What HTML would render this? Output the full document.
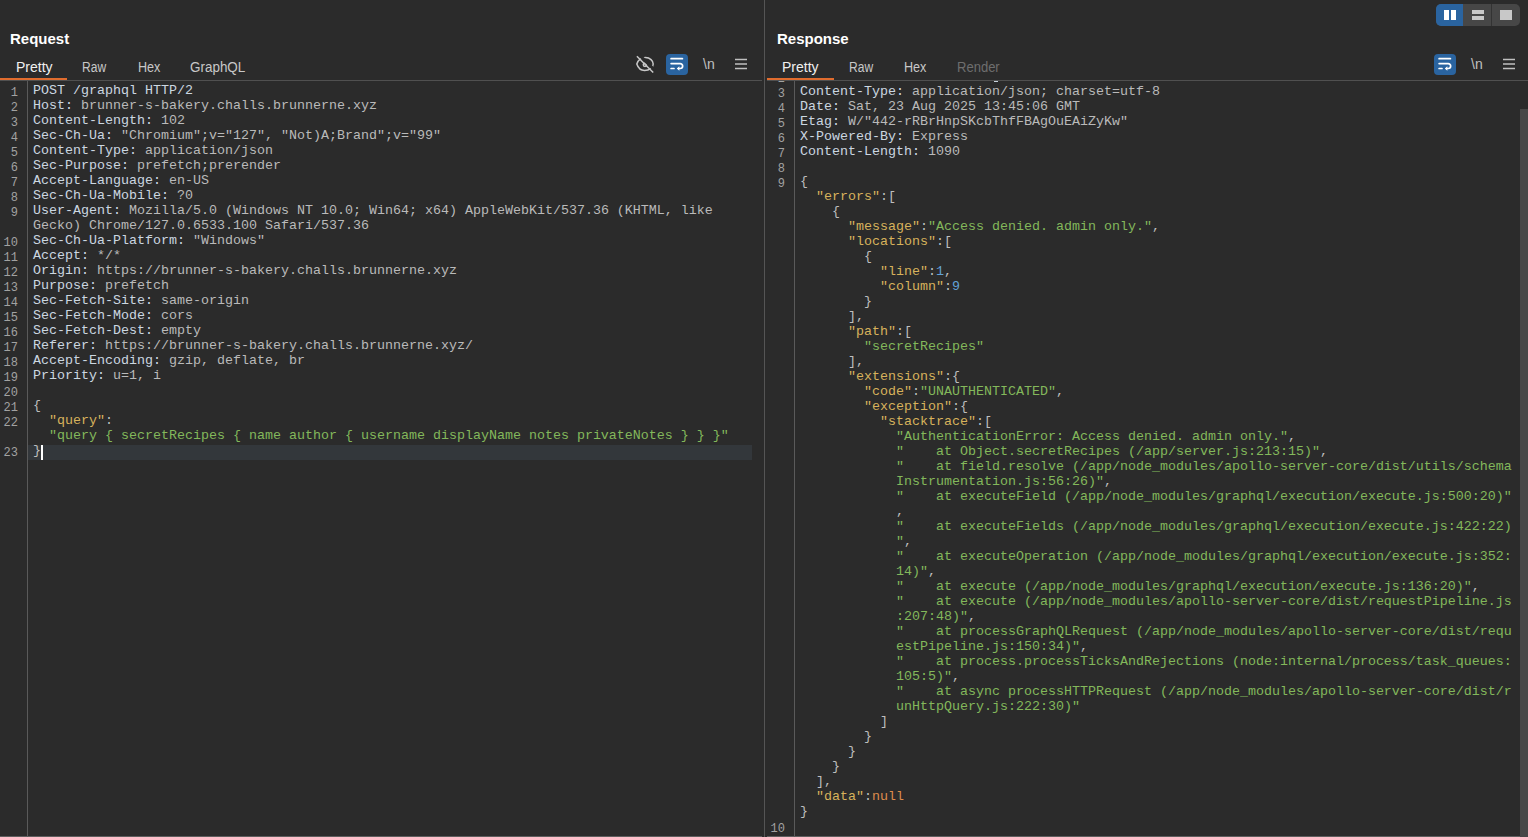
<!DOCTYPE html>
<html><head><meta charset="utf-8">
<style>
html,body{margin:0;padding:0;}
body{width:1528px;height:837px;background:#2b2b2b;position:relative;overflow:hidden;font-family:"Liberation Sans",sans-serif;}
.abs{position:absolute;}
.title{position:absolute;white-space:nowrap;font-weight:bold;font-size:15px;color:#ffffff;line-height:20px;}
.tab{position:absolute;white-space:nowrap;transform-origin:0 0;font-size:14px;color:#c8c8c8;line-height:18px;}
.row{position:absolute;white-space:pre;font-family:"Liberation Mono",monospace;font-size:13.333px;line-height:15px;height:15px;color:#bebebe;}
.ln{position:absolute;white-space:pre;font-family:"Liberation Mono",monospace;font-size:12px;line-height:15px;color:#a2a2a2;text-align:right;}
.hn{color:#ccd7e1}.hv{color:#bababa}.k{color:#d7b25c}.s{color:#83b85b}.nu{color:#62a2d7}.nl{color:#dd8d4d}.p{color:#bebebe}
.clipreq{position:absolute;left:0;top:81px;width:764px;height:756px;overflow:hidden;}
.clipres{position:absolute;left:765px;top:81px;width:763px;height:756px;overflow:hidden;}
</style></head><body>
<!-- layout buttons -->
<div class="abs" style="left:1436px;top:4px;width:84px;height:22px;border-radius:5px;background:#474747;overflow:hidden">
  <div class="abs" style="left:0;top:0;width:27px;height:22px;background:#2a64a0"></div>
  <div class="abs" style="left:55px;top:0;width:1px;height:22px;background:#333"></div>
  <div class="abs" style="left:8px;top:6px;width:5px;height:10px;background:#fff"></div>
  <div class="abs" style="left:15px;top:6px;width:5px;height:10px;background:#fff"></div>
  <div class="abs" style="left:36px;top:6px;width:12px;height:4px;background:#c8c8c8"></div>
  <div class="abs" style="left:36px;top:12px;width:12px;height:4px;background:#c8c8c8"></div>
  <div class="abs" style="left:64px;top:6px;width:12px;height:10px;background:#c8c8c8"></div>
</div>

<div class="title" style="left:10px;top:29px">Request</div>
<div class="title" style="left:777px;top:29px">Response</div>

<div class="tab" style="left:16px;top:58px;color:#f0f0f0">Pretty</div>
<div class="tab" style="left:82px;top:58px;transform:scaleX(0.86)">Raw</div>
<div class="tab" style="left:138px;top:58px;transform:scaleX(0.9)">Hex</div>
<div class="tab" style="left:190px;top:58px;transform:scaleX(0.96)">GraphQL</div>
<div class="tab" style="left:782px;top:58px;color:#f0f0f0">Pretty</div>
<div class="tab" style="left:849px;top:58px;transform:scaleX(0.86)">Raw</div>
<div class="tab" style="left:904px;top:58px;transform:scaleX(0.9)">Hex</div>
<div class="tab" style="left:957px;top:58px;color:#6e6e6e;transform:scaleX(0.93)">Render</div>

<!-- separators -->
<div class="abs" style="left:0;top:80px;width:762px;height:1px;background:#505050"></div>
<div class="abs" style="left:767px;top:80px;width:761px;height:1px;background:#505050"></div>
<div class="abs" style="left:0;top:78px;width:67px;height:2px;background:#e06c2e"></div>
<div class="abs" style="left:767px;top:78px;width:67px;height:2px;background:#e06c2e"></div>
<div class="abs" style="left:764px;top:0;width:1px;height:837px;background:#555"></div>
<div class="abs" style="left:0;top:836px;width:762px;height:1px;background:#5e5e5e"></div>
<div class="abs" style="left:767px;top:836px;width:761px;height:1px;background:#5e5e5e"></div>

<!-- request editor -->
<div class="clipreq">
 <div class="abs" style="left:0;top:-81px;width:764px;height:837px">
  <div class="abs" style="left:27px;top:81px;width:1px;height:756px;background:#5a5a5a"></div>
  <div class="abs" style="left:28px;top:445px;width:724px;height:15px;background:#33373b"></div>
  <div class="abs" style="left:41px;top:445px;width:2px;height:15px;background:#ffffff"></div>
<div class="ln" style="top:86px;right:746px">1</div>
<div class="row" style="top:83px;left:33px"><span class="hn">POST /graphql HTTP/2</span></div>
<div class="ln" style="top:101px;right:746px">2</div>
<div class="row" style="top:98px;left:33px"><span class="hn">Host:</span><span class="hv"> brunner-s-bakery.challs.brunnerne.xyz</span></div>
<div class="ln" style="top:116px;right:746px">3</div>
<div class="row" style="top:113px;left:33px"><span class="hn">Content-Length:</span><span class="hv"> 102</span></div>
<div class="ln" style="top:131px;right:746px">4</div>
<div class="row" style="top:128px;left:33px"><span class="hn">Sec-Ch-Ua:</span><span class="hv"> "Chromium";v="127", "Not)A;Brand";v="99"</span></div>
<div class="ln" style="top:146px;right:746px">5</div>
<div class="row" style="top:143px;left:33px"><span class="hn">Content-Type:</span><span class="hv"> application/json</span></div>
<div class="ln" style="top:161px;right:746px">6</div>
<div class="row" style="top:158px;left:33px"><span class="hn">Sec-Purpose:</span><span class="hv"> prefetch;prerender</span></div>
<div class="ln" style="top:176px;right:746px">7</div>
<div class="row" style="top:173px;left:33px"><span class="hn">Accept-Language:</span><span class="hv"> en-US</span></div>
<div class="ln" style="top:191px;right:746px">8</div>
<div class="row" style="top:188px;left:33px"><span class="hn">Sec-Ch-Ua-Mobile:</span><span class="hv"> ?0</span></div>
<div class="ln" style="top:206px;right:746px">9</div>
<div class="row" style="top:203px;left:33px"><span class="hn">User-Agent:</span><span class="hv"> Mozilla/5.0 (Windows NT 10.0; Win64; x64) AppleWebKit/537.36 (KHTML, like</span></div>
<div class="row" style="top:218px;left:33px"><span class="hv">Gecko) Chrome/127.0.6533.100 Safari/537.36</span></div>
<div class="ln" style="top:236px;right:746px">10</div>
<div class="row" style="top:233px;left:33px"><span class="hn">Sec-Ch-Ua-Platform:</span><span class="hv"> "Windows"</span></div>
<div class="ln" style="top:251px;right:746px">11</div>
<div class="row" style="top:248px;left:33px"><span class="hn">Accept:</span><span class="hv"> */*</span></div>
<div class="ln" style="top:266px;right:746px">12</div>
<div class="row" style="top:263px;left:33px"><span class="hn">Origin:</span><span class="hv"> https://brunner-s-bakery.challs.brunnerne.xyz</span></div>
<div class="ln" style="top:281px;right:746px">13</div>
<div class="row" style="top:278px;left:33px"><span class="hn">Purpose:</span><span class="hv"> prefetch</span></div>
<div class="ln" style="top:296px;right:746px">14</div>
<div class="row" style="top:293px;left:33px"><span class="hn">Sec-Fetch-Site:</span><span class="hv"> same-origin</span></div>
<div class="ln" style="top:311px;right:746px">15</div>
<div class="row" style="top:308px;left:33px"><span class="hn">Sec-Fetch-Mode:</span><span class="hv"> cors</span></div>
<div class="ln" style="top:326px;right:746px">16</div>
<div class="row" style="top:323px;left:33px"><span class="hn">Sec-Fetch-Dest:</span><span class="hv"> empty</span></div>
<div class="ln" style="top:341px;right:746px">17</div>
<div class="row" style="top:338px;left:33px"><span class="hn">Referer:</span><span class="hv"> https://brunner-s-bakery.challs.brunnerne.xyz/</span></div>
<div class="ln" style="top:356px;right:746px">18</div>
<div class="row" style="top:353px;left:33px"><span class="hn">Accept-Encoding:</span><span class="hv"> gzip, deflate, br</span></div>
<div class="ln" style="top:371px;right:746px">19</div>
<div class="row" style="top:368px;left:33px"><span class="hn">Priority:</span><span class="hv"> u=1, i</span></div>
<div class="ln" style="top:386px;right:746px">20</div>
<div class="row" style="top:383px;left:33px"></div>
<div class="ln" style="top:401px;right:746px">21</div>
<div class="row" style="top:398px;left:33px"><span class="p">{</span></div>
<div class="ln" style="top:416px;right:746px">22</div>
<div class="row" style="top:413px;left:33px">  <span class="k">"query"</span><span class="p">:</span></div>
<div class="row" style="top:428px;left:33px">  <span class="s">"query { secretRecipes { name author { username displayName notes privateNotes } } }"</span></div>
<div class="ln" style="top:446px;right:746px">23</div>
<div class="row" style="top:443px;left:33px"><span class="p">}</span></div>
 </div>
</div>

<!-- response editor -->
<div class="clipres">
 <div class="abs" style="left:-765px;top:-81px;width:1528px;height:837px">
  <div class="abs" style="left:794px;top:81px;width:1px;height:756px;background:#5a5a5a"></div>
  <div class="ln" style="top:72px;right:743px">2</div>
  <div class="abs" style="left:994px;top:81px;width:4px;height:1px;background:#c8d4de"></div>
<div class="ln" style="top:87px;right:743px">3</div>
<div class="row" style="top:84px;left:800px"><span class="hn">Content-Type:</span><span class="hv"> application/json; charset=utf-8</span></div>
<div class="ln" style="top:102px;right:743px">4</div>
<div class="row" style="top:99px;left:800px"><span class="hn">Date:</span><span class="hv"> Sat, 23 Aug 2025 13:45:06 GMT</span></div>
<div class="ln" style="top:117px;right:743px">5</div>
<div class="row" style="top:114px;left:800px"><span class="hn">Etag:</span><span class="hv"> W/"442-rRBrHnpSKcbThfFBAgOuEAiZyKw"</span></div>
<div class="ln" style="top:132px;right:743px">6</div>
<div class="row" style="top:129px;left:800px"><span class="hn">X-Powered-By:</span><span class="hv"> Express</span></div>
<div class="ln" style="top:147px;right:743px">7</div>
<div class="row" style="top:144px;left:800px"><span class="hn">Content-Length:</span><span class="hv"> 1090</span></div>
<div class="ln" style="top:162px;right:743px">8</div>
<div class="row" style="top:159px;left:800px"></div>
<div class="ln" style="top:177px;right:743px">9</div>
<div class="row" style="top:174px;left:800px"><span class="p">{</span></div>
<div class="row" style="top:189px;left:800px">  <span class="k">"errors"</span><span class="p">:[</span></div>
<div class="row" style="top:204px;left:800px">    <span class="p">{</span></div>
<div class="row" style="top:219px;left:800px">      <span class="k">"message"</span><span class="p">:</span><span class="s">"Access denied. admin only."</span><span class="p">,</span></div>
<div class="row" style="top:234px;left:800px">      <span class="k">"locations"</span><span class="p">:[</span></div>
<div class="row" style="top:249px;left:800px">        <span class="p">{</span></div>
<div class="row" style="top:264px;left:800px">          <span class="k">"line"</span><span class="p">:</span><span class="nu">1</span><span class="p">,</span></div>
<div class="row" style="top:279px;left:800px">          <span class="k">"column"</span><span class="p">:</span><span class="nu">9</span></div>
<div class="row" style="top:294px;left:800px">        <span class="p">}</span></div>
<div class="row" style="top:309px;left:800px">      <span class="p">],</span></div>
<div class="row" style="top:324px;left:800px">      <span class="k">"path"</span><span class="p">:[</span></div>
<div class="row" style="top:339px;left:800px">        <span class="s">"secretRecipes"</span></div>
<div class="row" style="top:354px;left:800px">      <span class="p">],</span></div>
<div class="row" style="top:369px;left:800px">      <span class="k">"extensions"</span><span class="p">:{</span></div>
<div class="row" style="top:384px;left:800px">        <span class="k">"code"</span><span class="p">:</span><span class="s">"UNAUTHENTICATED"</span><span class="p">,</span></div>
<div class="row" style="top:399px;left:800px">        <span class="k">"exception"</span><span class="p">:{</span></div>
<div class="row" style="top:414px;left:800px">          <span class="k">"stacktrace"</span><span class="p">:[</span></div>
<div class="row" style="top:429px;left:800px">            <span class="s">"AuthenticationError: Access denied. admin only."</span><span class="p">,</span></div>
<div class="row" style="top:444px;left:800px">            <span class="s">"    at Object.secretRecipes (/app/server.js:213:15)"</span><span class="p">,</span></div>
<div class="row" style="top:459px;left:800px">            <span class="s">"    at field.resolve (/app/node_modules/apollo-server-core/dist/utils/schema</span></div>
<div class="row" style="top:474px;left:800px">            <span class="s">Instrumentation.js:56:26)"</span><span class="p">,</span></div>
<div class="row" style="top:489px;left:800px">            <span class="s">"    at executeField (/app/node_modules/graphql/execution/execute.js:500:20)"</span></div>
<div class="row" style="top:504px;left:800px">            <span class="p">,</span></div>
<div class="row" style="top:519px;left:800px">            <span class="s">"    at executeFields (/app/node_modules/graphql/execution/execute.js:422:22)</span></div>
<div class="row" style="top:534px;left:800px">            <span class="s">"</span><span class="p">,</span></div>
<div class="row" style="top:549px;left:800px">            <span class="s">"    at executeOperation (/app/node_modules/graphql/execution/execute.js:352:</span></div>
<div class="row" style="top:564px;left:800px">            <span class="s">14)"</span><span class="p">,</span></div>
<div class="row" style="top:579px;left:800px">            <span class="s">"    at execute (/app/node_modules/graphql/execution/execute.js:136:20)"</span><span class="p">,</span></div>
<div class="row" style="top:594px;left:800px">            <span class="s">"    at execute (/app/node_modules/apollo-server-core/dist/requestPipeline.js</span></div>
<div class="row" style="top:609px;left:800px">            <span class="s">:207:48)"</span><span class="p">,</span></div>
<div class="row" style="top:624px;left:800px">            <span class="s">"    at processGraphQLRequest (/app/node_modules/apollo-server-core/dist/requ</span></div>
<div class="row" style="top:639px;left:800px">            <span class="s">estPipeline.js:150:34)"</span><span class="p">,</span></div>
<div class="row" style="top:654px;left:800px">            <span class="s">"    at process.processTicksAndRejections (node:internal/process/task_queues:</span></div>
<div class="row" style="top:669px;left:800px">            <span class="s">105:5)"</span><span class="p">,</span></div>
<div class="row" style="top:684px;left:800px">            <span class="s">"    at async processHTTPRequest (/app/node_modules/apollo-server-core/dist/r</span></div>
<div class="row" style="top:699px;left:800px">            <span class="s">unHttpQuery.js:222:30)"</span></div>
<div class="row" style="top:714px;left:800px">          <span class="p">]</span></div>
<div class="row" style="top:729px;left:800px">        <span class="p">}</span></div>
<div class="row" style="top:744px;left:800px">      <span class="p">}</span></div>
<div class="row" style="top:759px;left:800px">    <span class="p">}</span></div>
<div class="row" style="top:774px;left:800px">  <span class="p">],</span></div>
<div class="row" style="top:789px;left:800px">  <span class="k">"data"</span><span class="p">:</span><span class="nl">null</span></div>
<div class="row" style="top:804px;left:800px"><span class="p">}</span></div>
<div class="ln" style="top:822px;right:743px">10</div>
<div class="row" style="top:819px;left:800px"></div>
  <div class="abs" style="left:1520px;top:109px;width:8px;height:728px;background:#474747"></div>
 </div>
</div>

<!-- request icons -->
<svg class="abs" style="left:630px;top:50px" width="130" height="30" viewBox="0 0 130 30">
  <g fill="none" stroke="#c8c8c8" stroke-width="1.5">
    <path d="M6.8 14 C8.5 9.5 12 7.6 15.5 7.6 C20 7.6 23.2 10.8 23.2 14 C23.2 17.5 19.5 20.5 14.5 20.5 C10.5 20.5 8 17.5 6.8 14 Z"/>
    <circle cx="15" cy="14.8" r="1.7"/>
    <path d="M8.8 4.4 L25.1 20.6" stroke="#2b2b2b" stroke-width="3"/>
    <path d="M6.9 6.3 L23.2 22.5"/>
  </g>
  <rect x="36" y="4" width="22" height="21" rx="4" fill="#2a64a0"/>
  <g fill="none" stroke="#ffffff" stroke-width="1.7" stroke-linecap="round">
    <path d="M41.1 8.7 H52.4"/>
    <path d="M41.1 13.6 H50.2 A2.45 2.45 0 0 1 50.2 18.5 H48.5"/>
    <path d="M41.1 18.5 H44"/>
  </g>
  <path d="M46.8 18.5 L49.4 16.3 V20.7 Z" fill="#fff"/>
  <text x="73" y="19" font-family="Liberation Sans" font-size="14" fill="#c0c0c0">\n</text>
  <g stroke="#c0c0c0" stroke-width="1.6"><path d="M105 9.5H117M105 14H117M105 18.5H117"/></g>
</svg>
<svg class="abs" style="left:1398px;top:50px" width="130" height="30" viewBox="0 0 130 30">
  <rect x="36" y="4" width="22" height="21" rx="4" fill="#2a64a0"/>
  <g fill="none" stroke="#ffffff" stroke-width="1.7" stroke-linecap="round">
    <path d="M41.1 8.7 H52.4"/>
    <path d="M41.1 13.6 H50.2 A2.45 2.45 0 0 1 50.2 18.5 H48.5"/>
    <path d="M41.1 18.5 H44"/>
  </g>
  <path d="M46.8 18.5 L49.4 16.3 V20.7 Z" fill="#fff"/>
  <text x="73" y="19" font-family="Liberation Sans" font-size="14" fill="#c0c0c0">\n</text>
  <g stroke="#c0c0c0" stroke-width="1.6"><path d="M105 9.5H117M105 14H117M105 18.5H117"/></g>
</svg>
</body></html>
